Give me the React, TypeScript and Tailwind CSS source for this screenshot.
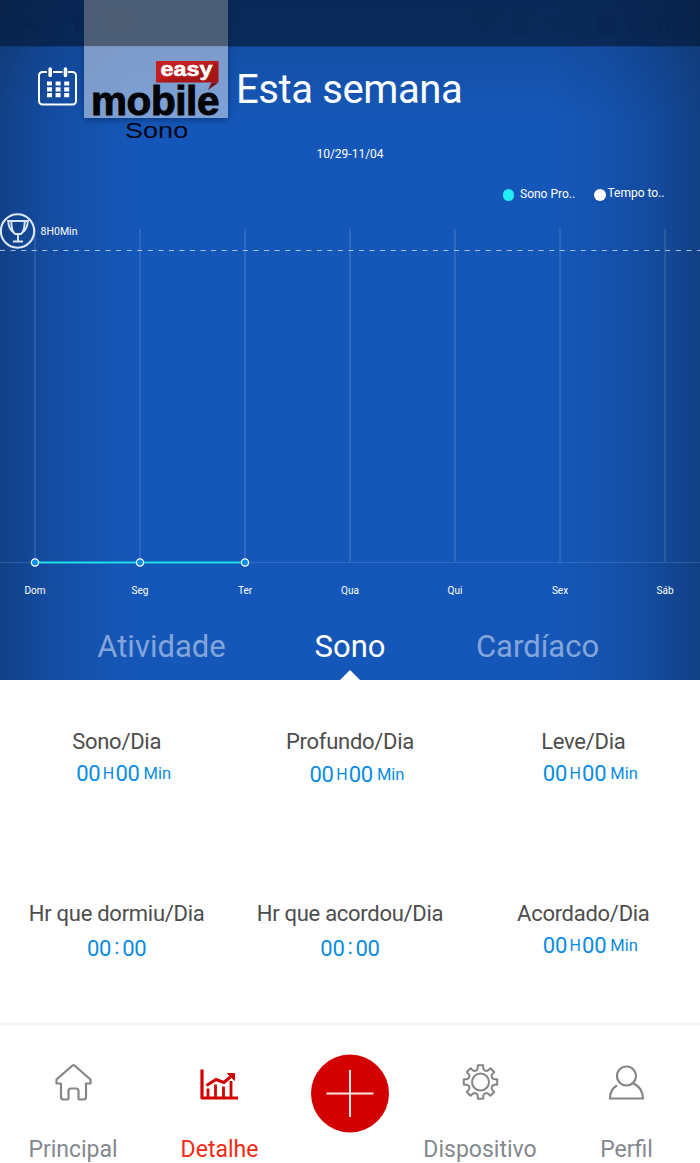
const DAYS = ['Dom', 'Seg', 'Ter', 'Qua', 'Qui', 'Sex', 'Sáb']

const TABS = [
  { label: 'Atividade', width: 129, active: false },
  { label: 'Sono', width: 71, active: true },
  { label: 'Cardíaco', width: 123, active: false },
]

type Stat = { label: string; kind: 'duration' | 'clock'; drop?: boolean }

const STATS: Stat[] = [
  { label: 'Sono/Dia', kind: 'duration' },
  { label: 'Profundo/Dia', kind: 'duration', drop: true },
  { label: 'Leve/Dia', kind: 'duration' },
  { label: 'Hr que dormiu/Dia', kind: 'clock' },
  { label: 'Hr que acordou/Dia', kind: 'clock' },
  { label: 'Acordado/Dia', kind: 'duration' },
]

// eight teeth, [angle, radius] pairs repeated every 45 degrees
const TOOTH = [
  [-9, 16.9],
  [9, 16.9],
  [12, 13.6],
  [18, 12.4],
  [27, 12.4],
  [33, 13.6],
]
const GEAR = Array.from({ length: 8 })
  .flatMap((_, i) =>
    TOOTH.map(([deg, r]) => {
      const a = ((deg + i * 45) * Math.PI) / 180
      return `${(19 + r * Math.sin(a)).toFixed(2)},${(19 - r * Math.cos(a)).toFixed(2)}`
    })
  )
  .join(' ')

export default function App() {
  return (
    <main className="relative flex h-[1163px] w-[700px] flex-col overflow-hidden bg-white font-['Roboto',sans-serif]">
      <section className="flex h-[680px] flex-col bg-[#1557b8] bg-[linear-gradient(to_right,rgba(14,38,76,0.46)_0px,rgba(14,38,76,0.28)_35px,rgba(14,38,76,0.12)_80px,transparent_135px,transparent_550px,rgba(14,38,76,0.1)_610px,rgba(14,38,76,0.28)_660px,rgba(14,38,76,0.48)_700px),linear-gradient(to_bottom,rgba(14,38,76,0.24)_0px,rgba(14,38,76,0.17)_46px,transparent_120px)]">
        <StatusBar />
        <header className="flex h-[83px] shrink-0 items-center pl-[38px]">
          <CalendarIcon />
          <h1 className="ml-[158px] mt-[2px] text-[40px] leading-none tracking-[-0.4px] text-white">Esta semana</h1>
        </header>
        <p className="flex h-12 shrink-0 items-center justify-center text-[12px] text-white">10/29-11/04</p>
        <div className="flex h-8 shrink-0 items-center pl-[502.5px] text-[12px] text-white">
          <span className="mt-0.5 size-[11.5px] rounded-full bg-[#22ecf4]" />
          <span className="ml-1.5 w-[73.5px]">Sono Pro..</span>
          <span className="mt-0.5 size-[12px] rounded-full bg-white" />
          <span className="-mt-0.5 ml-0.5">Tempo to..</span>
        </div>
        <SleepChart />
        <Tabs />
      </section>

      <section className="grid h-[343px] shrink-0 grid-cols-3 grid-rows-[172px_171px]">
        {STATS.map((stat) => (
          <StatCell key={stat.label} {...stat} />
        ))}
      </section>

      <BottomNav />
      <BrandMark />
    </main>
  )
}

function StatusBar() {
  return (
    <div className="h-[47px] w-full shrink-0 border-b border-[#0d3472]/60 bg-[#041733]/65 bg-clip-padding">
      <svg width="700" height="45" className="text-[#020d22] opacity-[0.06]" fill="currentColor">
        <path d="M20 12l10 10 9 6-3 2-8-4-5 9-2-10zM70 14h10v18h-6V20zM110 14h20l4 12-8 4h-10l-8-4z" />
        <path d="M471 14q15-8 30 0l-15 20zM512 14l4-5h14v26h-18zM598 14h16v22h-16z" />
        <text x="543" y="33" fontSize="24" fontFamily="Roboto" textLength="45">35%</text>
        <text x="623" y="33" fontSize="24" fontFamily="Roboto" textLength="62">15:03</text>
      </svg>
    </div>
  )
}

function CalendarIcon() {
  return (
    <svg width="40" height="40" viewBox="0 0 40 40" fill="none" stroke="white" className="-mt-[3px] shrink-0">
      <path d="M9 5H4.5A3.5 3.5 0 0 0 1 8.5V34A3.5 3.5 0 0 0 4.5 37.5H34.5A3.5 3.5 0 0 0 38 34V8.5A3.5 3.5 0 0 0 34.5 5H30M15 5H24.5" strokeWidth="2" />
      <path d="M12.2 2V8.5M27.5 2V8.5" strokeWidth="3.6" strokeLinecap="round" />
      <path d="M9 16.5H31.5M9 22.3H31.5M9 28.2H31.5" strokeWidth="4.2" strokeDasharray="5 3.6" />
    </svg>
  )
}

function SleepChart() {
  return (
    <svg width="700" height="400" viewBox="0 210 700 400" className="shrink-0">
      <g stroke="white" strokeOpacity="0.13" strokeWidth="1.6">
        {DAYS.map((day, i) => (
          <line key={day} x1={35 + i * 105} x2={35 + i * 105} y1="229" y2="562" />
        ))}
        <line x1="0" x2="700" y1="562.5" y2="562.5" strokeWidth="1" />
      </g>
      <line x1="0" x2="700" y1="250.5" y2="250.5" stroke="white" strokeOpacity="0.65" strokeDasharray="5 5.56" />

      <line x1="35" x2="245" y1="562.5" y2="562.5" stroke="#1fe0ea" strokeWidth="2.2" />
      {[35, 140, 245].map((x) => (
        <circle key={x} cx={x} cy="562.5" r="3.6" fill="#0a8fe6" stroke="white" strokeWidth="1.3" />
      ))}

      <g fill="none" stroke="#dbe6f8">
        <circle cx="17.5" cy="231" r="16.7" strokeWidth="2.1" />
        <path
          d="M7.2 221H28.8M11.3 221C11.3 229 12.5 232 15 234H21C23.5 232 24.700 229 24.700 221M13 232C9.500 229.500 8.500 226 8.200 221M23 232C26.500 229.500 27.500 226 27.800 221M18 234V241M13 241.5H23"
          strokeWidth="1.9"
        />
      </g>
      <g fontFamily="Roboto" fontSize="10.5" fill="white">
        <text x="40.5" y="235.2" textLength="37">8H0Min</text>
        {DAYS.map((day, i) => (
          <text key={day} x={35 + i * 105} y="593.8" textAnchor="middle" fontSize="10">
            {day}
          </text>
        ))}
      </g>
    </svg>
  )
}

function Tabs() {
  return (
    <nav className="flex h-[70px] shrink-0 justify-between pl-[97px] pr-[101px]">
      {TABS.map((tab) => (
        <div
          key={tab.label}
          className={`relative flex justify-center pt-[19px] text-[31px] leading-9 ${
            tab.active ? 'ml-[-2px] text-white' : 'text-[#84a5da]'
          }`}
          style={{ width: tab.width }}
        >
          {tab.label}
          {tab.active ? (
            <svg width="20" height="10" viewBox="0 0 20 10" className="absolute bottom-0 left-1/2 -translate-x-1/2">
              <path d="M0 10L10 0L20 10Z" fill="white" />
            </svg>
          ) : null}
        </div>
      ))}
    </nav>
  )
}

function StatCell({ label, kind, drop }: Stat) {
  return (
    <div className="flex flex-col items-center pt-[49px] whitespace-nowrap">
      <p className="text-[22px] leading-[26px] tracking-[-0.28px] text-[#4d4d4d]">{label}</p>
      {kind === 'duration' ? (
        <p
          className={`ml-[14px] flex items-baseline text-[22px] leading-[26px] tracking-[-0.3px] text-[#0a8ce3] ${
            drop ? 'mt-[7px]' : 'mt-1.5'
          }`}
        >
          00<span className="relative -top-[2px] ml-[2.5px] mr-[1.5px] text-[16px]">H</span>00
          <span className="relative -top-[2px] ml-1 text-[16.5px] tracking-normal">Min</span>
        </p>
      ) : (
        <p className="mt-[9px] flex text-[22px] leading-[26px] tracking-[-0.3px] text-[#0a8ce3]">
          00<span className="mx-[3px] -mt-0.5">:</span>00
        </p>
      )}
    </div>
  )
}

function BottomNav() {
  return (
    <nav className="grid h-[140px] shrink-0 grid-cols-[146px_147px_114px_146px_147px] border-t-2 border-[#f3f3f3] text-[23px] text-[#84888f]">
      <NavItem label="Principal">
        <svg width="40" height="40" viewBox="0 0 40 40" fill="none" stroke="#858585" strokeWidth="2.2" strokeLinejoin="round">
          <path d="M20.5 2Q20 2 19.5 2.5L3.5 16.5V20.5H8V34Q8 36.5 10.5 36.5H14.5Q15.5 36.5 15.5 35.5V28Q15.5 25.5 18 25.5H23Q25.5 25.5 25.5 28V35.5Q25.5 36.5 26.5 36.5H30.5Q33 36.5 33 34V20.5H37.5V16.5L21.5 2.5Q21 2 20.5 2Z" />
        </svg>
      </NavItem>
      <NavItem label="Detalhe" active>
        <svg width="40" height="40" viewBox="1.5 0 40 40" fill="none" stroke="#d20000">
          <path d="M3.5 6.5V35H39.5" strokeWidth="3.2" strokeLinejoin="round" />
          <path d="M9.5 34V25.5M17 34V21.5M25 34V23.5M32.5 34V18" strokeWidth="2.8" />
          <path d="M8 22.5L17.5 16.5L25.5 19.5L33.5 12.5" strokeWidth="3" />
          <path d="M29 10.5H36V17.5Z" fill="#d20000" strokeWidth="1" />
        </svg>
      </NavItem>
      <button className="flex items-start justify-center pt-[29px]">
        <svg width="78" height="79" viewBox="0 0 78 79">
          <circle cx="39" cy="39.5" r="39" fill="#d20000" />
          <path d="M39 16V63M15.5 39.5H62.5" stroke="white" strokeOpacity="0.9" strokeWidth="2" />
        </svg>
      </button>
      <NavItem label="Dispositivo">
        <svg width="40" height="40" viewBox="-1.5 0 40 40" fill="none" stroke="#858585" strokeWidth="2" strokeLinejoin="round">
          <polygon points={GEAR} />
          <circle cx="19" cy="19" r="8.5" />
        </svg>
      </NavItem>
      <NavItem label="Perfil">
        <svg width="40" height="40" viewBox="0.5 0 40 40" fill="none" stroke="#858585" strokeWidth="2.2">
          <circle cx="20" cy="13" r="9.5" />
          <path d="M10.5 22.5C6 25 3.5 29.5 3.5 35.5H36.5C36.5 28.5 32.5 22.5 26.5 20.5" />
        </svg>
      </NavItem>
    </nav>
  )
}

function NavItem({ label, active = false, children }: { label: string; active?: boolean; children: React.ReactNode }) {
  return (
    <div className="flex flex-col items-center pt-[38px] whitespace-nowrap">
      {children}
      <span className={`mt-[33px] leading-7 ${active ? 'text-[#f42a17]' : ''}`}>{label}</span>
    </div>
  )
}

// translucent brand card that hangs over the top of the screen
function BrandMark() {
  return (
    <div className="absolute left-[84px] top-0 w-36">
      <div className="h-[118px] bg-[linear-gradient(to_bottom,rgba(163,163,157,0.43)_46px,rgba(240,240,245,0.48)_46px)] shadow-[0_2px_6px_rgba(4,30,80,0.5)]">
        <svg width="144" height="118" viewBox="84 0 144 118" className="overflow-visible">
          <defs>
            <linearGradient id="tag" x1="0" x2="1" y1="0" y2="1">
              <stop offset="0.4" stopColor="#c5201f" />
              <stop offset="0.6" stopColor="#a81517" />
            </linearGradient>
          </defs>
          <path d="M156 61H218.5V82.5H156Z" fill="url(#tag)" />
          <path d="M218.5 82.5L208 90L211.5 82.5Z" fill="#7a0f18" />
          <text
            x="160.5"
            y="76.3"
            fontFamily="Liberation Sans"
            fontWeight="700"
            fontSize="20.5"
            fill="white"
            stroke="white"
            strokeWidth="0.5"
            textLength="52"
            lengthAdjust="spacingAndGlyphs"
          >
            easy
          </text>
          <text
            x="91"
            y="114.5"
            fontFamily="Liberation Sans"
            fontWeight="700"
            fontSize="40.5"
            fill="#020306"
            stroke="#020306"
            strokeWidth="1"
            textLength="128.5"
            lengthAdjust="spacing"
          >
            mobile
          </text>
        </svg>
      </div>
      <p className="ml-[41px] mt-px origin-left scale-x-[1.23] font-['Liberation_Sans',sans-serif] text-[22px] leading-6 text-[#020510]">Sono</p>
    </div>
  )
}
